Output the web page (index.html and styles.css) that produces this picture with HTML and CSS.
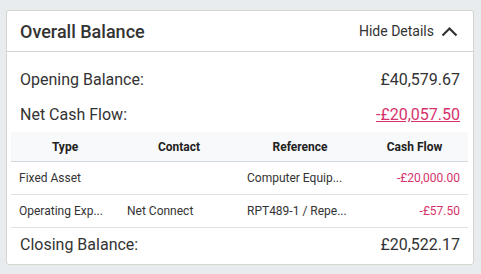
FILE: index.html
```html
<!DOCTYPE html>
<html>
<head>
<meta charset="utf-8">
<link rel="stylesheet" href="styles.css">
</head>
<body>
<div class="card">
  <div class="card-header">
    <h2 class="title">Overall Balance</h2>
    <button class="toggle">Hide Details
      <svg width="17" height="11" viewBox="0 0 17 11"><path d="M1.5 9.5 L8.5 2.5 L15.5 9.5" fill="none" stroke="#333" stroke-width="2.2"/></svg>
    </button>
  </div>
  <div class="card-body">
    <div class="summary"><span>Opening Balance:</span><span>£40,579.67</span></div>
    <div class="summary"><span>Net Cash Flow:</span><a class="neg link" href="#">-£20,057.50</a></div>
    <table class="tx">
      <colgroup><col class="c1"><col class="c2"><col class="c3"><col class="c4"></colgroup>
      <thead>
        <tr><th>Type</th><th>Contact</th><th>Reference</th><th>Cash Flow</th></tr>
      </thead>
      <tbody>
        <tr><td>Fixed Asset</td><td></td><td>Computer Equip...</td><td class="amt neg">-£20,000.00</td></tr>
        <tr><td>Operating Exp...</td><td>Net Connect</td><td>RPT489-1 / Repe...</td><td class="amt neg">-£57.50</td></tr>
      </tbody>
    </table>
    <div class="summary closing"><span>Closing Balance:</span><span>£20,522.17</span></div>
  </div>
</div>
</body>
</html>
```
FILE: styles.css
```css
html, body {
  margin: 0;
  padding: 0;
  background: #e9ecef;
  font-family: Roboto, "Liberation Sans", sans-serif;
  color: #333;
}
body {
  padding: 10px 0 0 6px;
}
.card {
  width: 466px;
  height: 253px;
  background: #fff;
  border: 1px solid #d6d6d0;
  border-radius: 3px;
}
.card-header {
  height: 40px;
  border-bottom: 1px solid #d3d3d3;
  display: flex;
  align-items: center;
  justify-content: space-between;
  padding: 0 15px 0 13px;
}
.title {
  margin: 0;
  font-size: 18px;
  font-weight: 500;
  color: #333;
}
.toggle {
  border: 0;
  background: none;
  padding: 0;
  font-family: inherit;
  font-size: 14px;
  color: #333;
  display: flex;
  align-items: center;
  gap: 7px;
}
.card-body {
  padding: 10px 4px 0 4px;
}
.summary {
  height: 35px;
  display: flex;
  align-items: center;
  justify-content: space-between;
  padding: 0 9px 0 9px;
  font-size: 16px;
}
.neg {
  color: #d6336c;
}
.link {
  text-decoration: underline;
}
.tx {
  width: 457px;
  border-collapse: collapse;
  font-size: 12px;
  table-layout: fixed;
}
.c1 { width: 108px; }
.c2 { width: 120px; }
.c3 { width: 122px; }
.c4 { width: 107px; }
.tx th {
  background: #f8f9fa;
  height: 29px;
  font-weight: 700;
  color: #222;
  border-bottom: 1px solid #d3d8de;
  padding: 0;
}
.tx td {
  height: 32px;
  padding: 0 8px;
  border-bottom: 1px solid #dee2e6;
  white-space: nowrap;
  color: #333;
}
.tx td.amt {
  text-align: right;
  color: #d6336c;
}
.closing {
  height: 32px;
}
```
